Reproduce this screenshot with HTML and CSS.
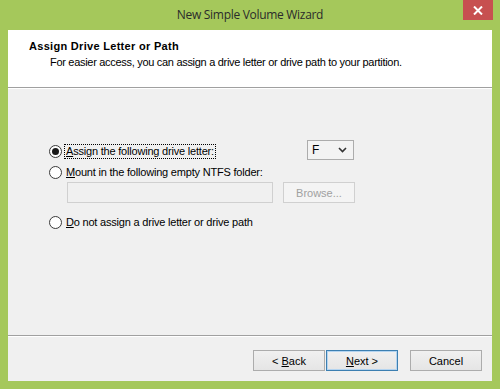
FILE: index.html
```html
<!DOCTYPE html>
<html lang="en">
<head>
    <meta charset="UTF-8">
    <title>New Simple Volume Wizard</title>
    <link rel="stylesheet" href="styles.css">
</head>
<body>
    <div class="window">
        <div class="title-bar">
            <span></span>
            <span class="title-text">New Simple Volume Wizard</span>
            <div class="close-btn">
                <svg width="10" height="9" viewBox="0 0 10 9">
                    <path d="M1 0.5 L9 8.5 M9 0.5 L1 8.5" stroke="#fff" stroke-width="2"/>
                </svg>
            </div>
        </div>

        <div class="client">
            <div class="wiz-header">
                <h1>Assign Drive Letter or Path</h1>
                <p>For easier access, you can assign a drive letter or drive path to your partition.</p>
            </div>

            <div class="wiz-body">
                <div class="opt-row first">
                    <span class="radio checked"></span>
                    <span class="opt-label focus"><u>A</u>ssign the following drive letter:</span>
                    <div class="combo">
                        <span>F</span>
                        <svg width="9" height="6" viewBox="0 0 9 6">
                            <path d="M1 1 L4.5 4.5 L8 1" stroke="#333" stroke-width="1.6" fill="none"/>
                        </svg>
                    </div>
                </div>
                <div class="opt-row">
                    <span class="radio"></span>
                    <span class="opt-label"><u>M</u>ount in the following empty NTFS folder:</span>
                </div>
                <div class="folder-row">
                    <div class="folder-input"></div>
                    <div class="btn disabled">Browse...</div>
                </div>
                <div class="opt-row">
                    <span class="radio"></span>
                    <span class="opt-label"><u>D</u>o not assign a drive letter or drive path</span>
                </div>
            </div>

            <div class="wiz-footer">
                <div class="btn">&lt;&nbsp;<u>B</u>ack</div>
                <div class="btn default"><u>N</u>ext &gt;</div>
                <div class="btn cancel">Cancel</div>
            </div>
        </div>
    </div>
</body>
</html>
```

FILE: styles.css
```css
* {
    margin: 0;
    padding: 0;
    box-sizing: border-box;
}

body {
    font-family: "Liberation Sans", Arial, sans-serif;
    font-size: 11px;
    color: #000;
    background: #a5c85b;
}

.window {
    width: 500px;
    height: 389px;
    background: #a5c85b;
    padding: 0 8px 8px 8px;
    display: flex;
    flex-direction: column;
}

.title-bar {
    height: 30px;
    display: grid;
    grid-template-columns: 1fr auto 1fr;
    align-items: start;
}

.title-text {
    font-family: "Open Sans", "Noto Sans", sans-serif;
    font-size: 12px;
    letter-spacing: -0.3px;
    color: #2b2b2b;
    line-height: 30px;
}

.close-btn {
    justify-self: end;
    width: 30px;
    height: 20px;
    margin-right: -1px;
    background: #c75050;
    display: flex;
    align-items: center;
    justify-content: center;
}

.client {
    flex: 1;
    display: flex;
    flex-direction: column;
    background: #f0f0f0;
}

.wiz-header {
    height: 58px;
    background: #fff;
    padding: 10px 0 0 21px;
    border-bottom: 1px solid #a0a0a0;
    box-shadow: 0 1px 0 #fff;
}

.wiz-header h1 {
    font-size: 11px;
    font-weight: bold;
    letter-spacing: 0.3px;
    line-height: 13px;
}

.wiz-header p {
    margin-top: 3px;
    padding-left: 21px;
    letter-spacing: -0.3px;
    line-height: 13px;
}

.wiz-body {
    flex: 1;
    margin-top: 1px;
    padding: 52px 0 0 41px;
    border-bottom: 1px solid #a0a0a0;
    box-shadow: 0 1px 0 #fff;
}

.opt-row {
    display: flex;
    align-items: center;
    height: 22px;
}

.opt-row.first {
    height: 20px;
}

.radio {
    width: 13px;
    height: 13px;
    border-radius: 50%;
    border: 1px solid #3a3a3a;
    background: #fff;
    display: flex;
    align-items: center;
    justify-content: center;
}

.radio.checked::after {
    content: "";
    width: 7px;
    height: 7px;
    border-radius: 50%;
    background: #1a1a1a;
}

.opt-label {
    margin-left: 3px;
    padding: 0 1px;
    letter-spacing: -0.2px;
    line-height: 13px;
}

.opt-label.focus {
    outline: 1px dotted #000;
}

.combo {
    margin-left: auto;
    margin-right: 138px;
    margin-top: -2px;
    width: 47px;
    height: 20px;
    border: 1px solid #acacac;
    background: #f3f3f3;
    display: flex;
    align-items: center;
    justify-content: space-between;
    padding: 0 6px 0 4px;
    font-size: 12px;
}

.folder-row {
    display: flex;
    gap: 10px;
    margin: -1px 0 0 18px;
    height: 21px;
}

.folder-input {
    width: 206px;
    height: 21px;
    border: 1px solid #d0d0d0;
    background: #f0f0f0;
}

.btn {
    width: 72px;
    height: 21px;
    border: 1px solid #acacac;
    background: linear-gradient(#f0f0f0, #e5e5e5);
    display: flex;
    align-items: center;
    justify-content: center;
}

.btn.disabled {
    color: #a0a0a0;
    border-color: #d0d0d0;
    background: #f4f4f4;
}

.folder-row + .opt-row {
    margin-top: 8px;
}

.wiz-footer {
    height: 44px;
    margin-top: 1px;
    display: flex;
    align-items: flex-start;
    padding: 13px 0 0 245px;
    gap: 1px;
}

.btn.default {
    border-color: #3c7fb1;
    box-shadow: inset 0 0 0 1px #b4d4f0;
}

.btn.cancel {
    margin-left: 11px;
}
```
